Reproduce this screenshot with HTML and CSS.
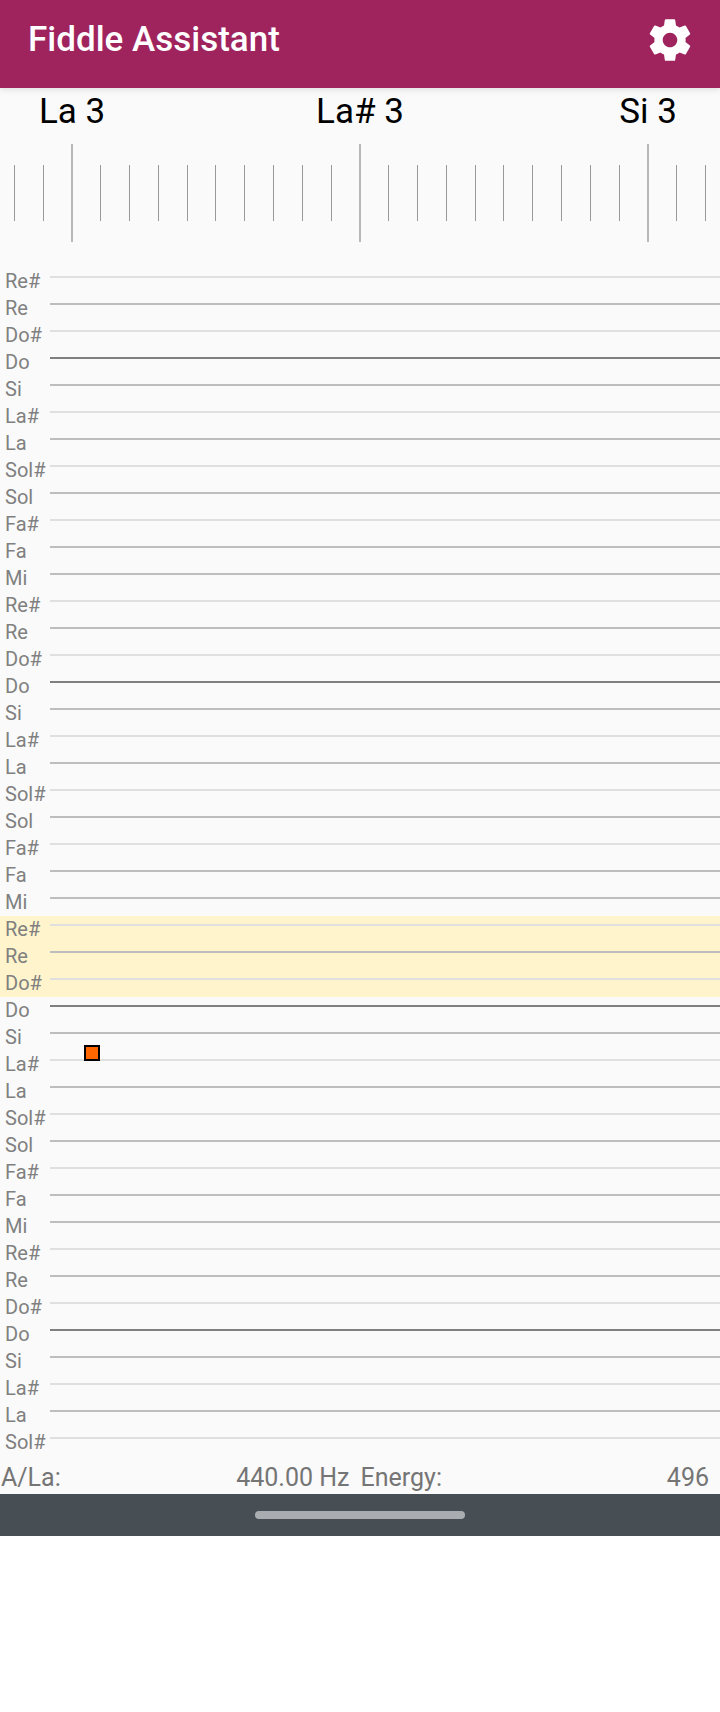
FILE: index.html
```html
<!DOCTYPE html>
<html lang="en">
<head>
<meta charset="utf-8">
<title>Fiddle Assistant</title>
<link rel="stylesheet" href="styles.css">
</head>
<body>
<div class="app">
  <header class="topbar">
    <h1 class="title">Fiddle Assistant</h1>
    <svg class="gear" viewBox="0 0 24 24" aria-label="Settings"><path d="M19.43 12.98c.04-.32.07-.64.07-.98s-.03-.66-.07-.98l2.11-1.65c.19-.15.24-.42.12-.64l-2-3.46c-.12-.22-.39-.3-.61-.22l-2.49 1c-.52-.4-1.08-.73-1.69-.98l-.38-2.65C14.46 2.18 14.25 2 14 2h-4c-.25 0-.46.18-.49.42l-.38 2.65c-.61.25-1.17.59-1.69.98l-2.49-1c-.23-.09-.49 0-.61.22l-2 3.46c-.13.22-.07.49.12.64l2.11 1.65c-.04.32-.07.65-.07.98s.03.66.07.98l-2.11 1.65c-.19.15-.24.42-.12.64l2 3.46c.12.22.39.3.61.22l2.49-1c.52.4 1.08.73 1.69.98l.38 2.65c.03.24.24.42.49.42h4c.25 0 .46-.18.49-.42l.38-2.65c.61-.25 1.17-.59 1.69-.98l2.49 1c.23.09.49 0 .61-.22l2-3.46c.12-.22.07-.49-.12-.64l-2.11-1.65zM12 15.5c-1.93 0-3.5-1.57-3.5-3.5s1.57-3.5 3.5-3.5 3.5 1.57 3.5 3.5-1.57 3.5-3.5 3.5z"/></svg>
  </header>

  <section class="tuner">
    <div class="notes">
      <span class="note">La 3</span>
      <span class="note">La# 3</span>
      <span class="note">Si 3</span>
    </div>
    <div class="ticks">
      <i class="cell"><b class="tick"></b></i><i class="cell"><b class="tick"></b></i><i class="cell"><b class="tick major"></b></i>
      <i class="cell"><b class="tick"></b></i><i class="cell"><b class="tick"></b></i><i class="cell"><b class="tick"></b></i><i class="cell"><b class="tick"></b></i><i class="cell"><b class="tick"></b></i><i class="cell"><b class="tick"></b></i><i class="cell"><b class="tick"></b></i><i class="cell"><b class="tick"></b></i><i class="cell"><b class="tick"></b></i>
      <i class="cell"><b class="tick major"></b></i>
      <i class="cell"><b class="tick"></b></i><i class="cell"><b class="tick"></b></i><i class="cell"><b class="tick"></b></i><i class="cell"><b class="tick"></b></i><i class="cell"><b class="tick"></b></i><i class="cell"><b class="tick"></b></i><i class="cell"><b class="tick"></b></i><i class="cell"><b class="tick"></b></i><i class="cell"><b class="tick"></b></i>
      <i class="cell"><b class="tick major"></b></i>
      <i class="cell"><b class="tick"></b></i><i class="cell"><b class="tick"></b></i>
    </div>
  </section>

  <section class="staff">
    <div class="row sharp"><span class="label">Re#</span><i class="line"></i></div>
    <div class="row natural"><span class="label">Re</span><i class="line"></i></div>
    <div class="row sharp"><span class="label">Do#</span><i class="line"></i></div>
    <div class="row octave"><span class="label">Do</span><i class="line"></i></div>
    <div class="row natural"><span class="label">Si</span><i class="line"></i></div>
    <div class="row sharp"><span class="label">La#</span><i class="line"></i></div>
    <div class="row natural"><span class="label">La</span><i class="line"></i></div>
    <div class="row sharp"><span class="label">Sol#</span><i class="line"></i></div>
    <div class="row natural"><span class="label">Sol</span><i class="line"></i></div>
    <div class="row sharp"><span class="label">Fa#</span><i class="line"></i></div>
    <div class="row natural"><span class="label">Fa</span><i class="line"></i></div>
    <div class="row natural"><span class="label">Mi</span><i class="line"></i></div>
    <div class="row sharp"><span class="label">Re#</span><i class="line"></i></div>
    <div class="row natural"><span class="label">Re</span><i class="line"></i></div>
    <div class="row sharp"><span class="label">Do#</span><i class="line"></i></div>
    <div class="row octave"><span class="label">Do</span><i class="line"></i></div>
    <div class="row natural"><span class="label">Si</span><i class="line"></i></div>
    <div class="row sharp"><span class="label">La#</span><i class="line"></i></div>
    <div class="row natural"><span class="label">La</span><i class="line"></i></div>
    <div class="row sharp"><span class="label">Sol#</span><i class="line"></i></div>
    <div class="row natural"><span class="label">Sol</span><i class="line"></i></div>
    <div class="row sharp"><span class="label">Fa#</span><i class="line"></i></div>
    <div class="row natural"><span class="label">Fa</span><i class="line"></i></div>
    <div class="row natural"><span class="label">Mi</span><i class="line"></i></div>
    <div class="row sharp active"><span class="label">Re#</span><i class="line"></i></div>
    <div class="row natural active"><span class="label">Re</span><i class="line"></i></div>
    <div class="row sharp active"><span class="label">Do#</span><i class="line"></i></div>
    <div class="row octave"><span class="label">Do</span><i class="line"></i></div>
    <div class="row natural"><span class="label">Si</span><i class="line"></i></div>
    <div class="row sharp"><span class="label">La#</span><i class="line"></i></div>
    <div class="row natural"><span class="label">La</span><i class="line"></i></div>
    <div class="row sharp"><span class="label">Sol#</span><i class="line"></i></div>
    <div class="row natural"><span class="label">Sol</span><i class="line"></i></div>
    <div class="row sharp"><span class="label">Fa#</span><i class="line"></i></div>
    <div class="row natural"><span class="label">Fa</span><i class="line"></i></div>
    <div class="row natural"><span class="label">Mi</span><i class="line"></i></div>
    <div class="row sharp"><span class="label">Re#</span><i class="line"></i></div>
    <div class="row natural"><span class="label">Re</span><i class="line"></i></div>
    <div class="row sharp"><span class="label">Do#</span><i class="line"></i></div>
    <div class="row octave"><span class="label">Do</span><i class="line"></i></div>
    <div class="row natural"><span class="label">Si</span><i class="line"></i></div>
    <div class="row sharp"><span class="label">La#</span><i class="line"></i></div>
    <div class="row natural"><span class="label">La</span><i class="line"></i></div>
    <div class="row sharp"><span class="label">Sol#</span><i class="line"></i></div>
    <i class="marker"></i>
  </section>

  <footer class="stats">
    <div class="stat"><span>A/La:</span><span>440.00 Hz</span></div>
    <div class="stat"><span>Energy:</span><span>496</span></div>
  </footer>

  <nav class="navbar"><i class="handle"></i></nav>
</div>
</body>
</html>
```

FILE: styles.css
```css
* { box-sizing: border-box; }

html, body { margin: 0; padding: 0; background: #fff; }

body { font-family: Roboto, "Noto Sans", sans-serif; }

.app { width: 720px; background: #fafafa; }

.topbar {
  position: relative;
  height: 88px;
  display: flex;
  align-items: center;
  justify-content: space-between;
  padding: 0 25px 9px 28px;
  background: #9f245e;
  box-shadow: 0 2px 6px rgba(0, 0, 0, 0.1);
}

.title {
  margin: 1px 0 0;
  color: #fff;
  font-size: 35px;
  font-weight: 500;
  line-height: 40px;
}

.gear { width: 50px; height: 50px; fill: #fff; }

.notes {
  height: 56px;
  padding-bottom: 8px;
  display: grid;
  grid-template-columns: repeat(3, 144px);
  justify-content: space-between;
  align-items: center;
}

.note {
  color: #000;
  font-size: 35px;
  line-height: 44px;
  text-align: center;
}

.ticks { display: flex; height: 98px; margin-bottom: 26px; }

.cell { flex: 1; display: flex; justify-content: center; align-items: center; }

.tick { width: 1px; height: 56px; background: #999; }

.tick.major { height: 98px; width: 2px; background: #b8b8b8; }

.staff { position: relative; }

.row { display: grid; grid-template-columns: 50px 1fr; height: 27px; }

.row.active { background: #fff4cb; }

.label {
  padding-left: 5px;
  color: #808080;
  font-size: 20px;
  line-height: 27px;
  white-space: nowrap;
}

.line { height: 2px; margin-top: 8px; }

.sharp .line { background: #e0e0e0; }
.natural .line { background: #bdbdbd; }
.octave .line { background: #808080; }

.marker {
  position: absolute;
  left: 84px;
  top: 777px;
  width: 16px;
  height: 16px;
  border: 2px solid #000;
  background: #ff6600;
}

.stats {
  height: 38px;
  display: grid;
  grid-template-columns: 1fr 1fr;
  column-gap: 11px;
  padding: 5px 11px 0 1px;
  color: #757575;
  font-size: 25px;
  line-height: 33px;
}

.stat { display: flex; justify-content: space-between; }

.navbar {
  height: 42px;
  display: flex;
  align-items: center;
  justify-content: center;
  background: #474e54;
}

.handle { width: 210px; height: 8px; border-radius: 4px; background: #a9adb0; }
```
